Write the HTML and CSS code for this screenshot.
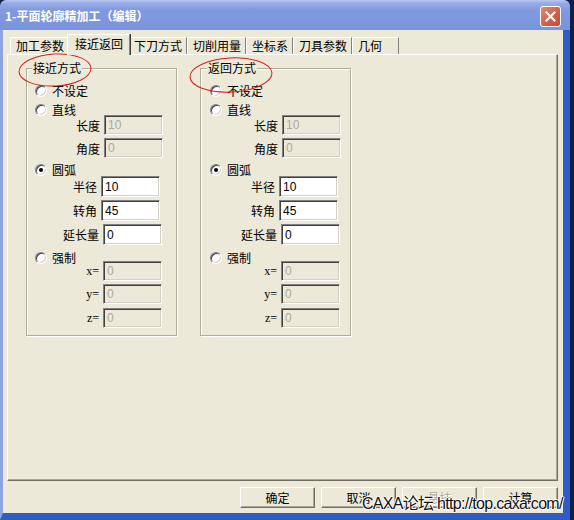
FILE: index.html
```html
<!DOCTYPE html>
<html lang="zh-CN">
<head>
<meta charset="utf-8">
<title>1-平面轮廓精加工(编辑)</title>
<link rel="stylesheet" href="styles.css">
</head>
<body>
<div class="window">
  <div class="titlebar">
    <span class="title">1-平面轮廓精加工（编辑）</span>
    <span class="close"><svg width="11" height="11" viewBox="0 0 11 11"><path d="M1.5 1.5 L9.5 9.5 M9.5 1.5 L1.5 9.5" stroke="#fff" stroke-width="2.2" stroke-linecap="square"/></svg></span>
  </div>
  <div class="frame">
    <div class="tabs">
      <div class="tab">加工参数</div>
      <div class="tab active">接近返回</div>
      <div class="tab">下刀方式</div>
      <div class="tab">切削用量</div>
      <div class="tab">坐标系</div>
      <div class="tab">刀具参数</div>
      <div class="tab">几何</div>
    </div>
    <div class="panel">
      <div class="group">
        <div class="legend">接近方式</div>
        <div class="opt r-none"><span class="radio"></span>不设定</div>
        <div class="opt r-line"><span class="radio"></span>直线</div>
        <div class="field f-len"><span class="lbl">长度</span><span class="box dis">10</span></div>
        <div class="field f-ang"><span class="lbl">角度</span><span class="box dis">0</span></div>
        <div class="opt r-arc"><span class="radio on"></span>圆弧</div>
        <div class="field tall f-rad"><span class="lbl">半径</span><span class="box">10</span></div>
        <div class="field tall f-turn"><span class="lbl">转角</span><span class="box">45</span></div>
        <div class="field tall f-ext"><span class="lbl">延长量</span><span class="box">0</span></div>
        <div class="opt r-force"><span class="radio"></span>强制</div>
        <div class="field f-x"><span class="lbl xyz">x=</span><span class="box dis">0</span></div>
        <div class="field f-y"><span class="lbl xyz">y=</span><span class="box dis">0</span></div>
        <div class="field f-z"><span class="lbl xyz">z=</span><span class="box dis">0</span></div>
      </div>
      <div class="group right">
        <div class="legend">返回方式</div>
        <div class="opt r-none"><span class="radio"></span>不设定</div>
        <div class="opt r-line"><span class="radio"></span>直线</div>
        <div class="field f-len"><span class="lbl">长度</span><span class="box dis">10</span></div>
        <div class="field f-ang"><span class="lbl">角度</span><span class="box dis">0</span></div>
        <div class="opt r-arc"><span class="radio on"></span>圆弧</div>
        <div class="field tall f-rad"><span class="lbl">半径</span><span class="box">10</span></div>
        <div class="field tall f-turn"><span class="lbl">转角</span><span class="box">45</span></div>
        <div class="field tall f-ext"><span class="lbl">延长量</span><span class="box">0</span></div>
        <div class="opt r-force"><span class="radio"></span>强制</div>
        <div class="field f-x"><span class="lbl xyz">x=</span><span class="box dis">0</span></div>
        <div class="field f-y"><span class="lbl xyz">y=</span><span class="box dis">0</span></div>
        <div class="field f-z"><span class="lbl xyz">z=</span><span class="box dis">0</span></div>
      </div>
    </div>
    <div class="buttons">
      <div class="btn">确定</div>
      <div class="btn">取消</div>
      <div class="btn disabled">悬挂</div>
      <div class="btn">计算</div>
    </div>
  </div>
  <svg class="marks" width="574" height="520" viewBox="0 0 574 520">
    <ellipse cx="55" cy="70" rx="36" ry="16" transform="rotate(-3 55 70)" fill="none" stroke="#cc2222" stroke-width="1"/>
    <ellipse cx="231" cy="75" rx="41" ry="17" transform="rotate(-3 231 75)" fill="none" stroke="#cc2222" stroke-width="1"/>
  </svg>
  <div class="watermark">CAXA论坛 http://top.caxa.com/</div>
</div>
</body>
</html>
```
FILE: styles.css
```css
html, body {
  margin: 0;
  padding: 0;
}
body {
  width: 574px;
  height: 520px;
  overflow: hidden;
  background: #0e1f4a;
  font-family: "Noto Sans CJK SC", sans-serif;
  font-size: 12px;
  color: #000;
}
.window {
  position: relative;
  width: 570px;
  height: 520px;
  display: flex;
  flex-direction: column;
}
.titlebar {
  height: 30px;
  flex: none;
  box-sizing: border-box;
  display: flex;
  align-items: flex-start;
  padding: 0 9px 0 5px;
  background: linear-gradient(180deg, #b9c8f1 0, #98ade7 3px, #8199df 10px, #7a94dc 100%);
  border-radius: 6px 6px 0 0;
}
.title {
  flex: 1;
  color: #fff;
  font-weight: bold;
  font-size: 12px;
  line-height: 16px;
  margin-top: 8px;
  white-space: nowrap;
}
.close {
  width: 21px;
  height: 21px;
  margin-top: 6px;
  box-sizing: border-box;
  border: 1px solid #fff;
  border-radius: 3px;
  background: linear-gradient(135deg, #e58a72 0%, #d1604a 55%, #c24a36 100%);
  display: flex;
  align-items: center;
  justify-content: center;
}
.frame {
  flex: 1;
  display: flex;
  flex-direction: column;
  background: #ece9d8;
  border-left: 3px solid #8ea3df;
  border-right: 7px solid #2f5bc6;
  border-bottom: 7px solid #2f5bc6;
  padding: 0 5px 0 4px;
}
.tabs {
  height: 24px;
  flex: none;
  display: flex;
  align-items: flex-end;
  padding-left: 3px;
}
.tab {
  height: 17px;
  box-sizing: border-box;
  min-width: 47px;
  padding: 0 4px 0 5px;
  line-height: 15px;
  border-top: 1px solid #fff;
  border-left: 1px solid #fff;
  border-right: 1px solid #808080;
  border-radius: 2px 0 0 0;
  white-space: nowrap;
}
.tab.active {
  position: relative;
  z-index: 1;
  height: 21px;
  margin: 0 -2px -1px -2px;
  padding: 0 6px 0 7px;
  line-height: 17px;
  background: #ece9d8;
  box-shadow: 1px 0 0 #404040;
}
.panel {
  height: 427px;
  flex: none;
  box-sizing: border-box;
  border: 1px solid;
  border-color: #fff #716f64 #716f64 #fff;
  box-shadow: inset -1px -1px 0 #aca899;
  display: flex;
  align-items: flex-start;
  gap: 23px;
  padding: 13px 0 0 18px;
}
.group {
  width: 151px;
  height: 268px;
  box-sizing: border-box;
  border: 1px solid #b0ad9a;
  box-shadow: inset 1px 1px 0 #fff, 1px 1px 0 #fff;
  display: flex;
  flex-direction: column;
}
.legend {
  align-self: flex-start;
  height: 16px;
  line-height: 16px;
  margin: -9px 0 0 5px;
  padding: 0 1px;
  background: #ece9d8;
}
.right .legend {
  margin-left: 6px;
}
.opt {
  height: 10px;
  line-height: 10px;
  display: flex;
  align-items: center;
  gap: 5px;
  padding-left: 8px;
  white-space: nowrap;
}
.right .opt {
  padding-left: 9px;
}
.radio {
  flex: none;
  position: relative;
  width: 12px;
  height: 12px;
  box-sizing: border-box;
  border-radius: 50%;
  border: 1px solid;
  border-color: #808080 #fff #fff #808080;
  box-shadow: inset 1px 1px 0 #404040, inset -1px -1px 0 #d4d0c8;
  background: #fff;
}
.radio.on::after {
  content: "";
  position: absolute;
  left: 3px;
  top: 3px;
  width: 4px;
  height: 4px;
  border-radius: 50%;
  background: #000;
}
.field {
  height: 20px;
  display: flex;
  align-items: stretch;
}
.field.tall {
  height: 21px;
}
.lbl {
  flex: none;
  width: 70px;
  margin-right: 4px;
  text-align: right;
  display: flex;
  align-items: center;
  justify-content: flex-end;
  white-space: nowrap;
}
.lbl.xyz {
  font-family: "Liberation Serif", "DejaVu Serif", serif;
  font-size: 12px;
}
.box {
  flex: none;
  width: 59px;
  box-sizing: border-box;
  border: 1px solid;
  border-color: #808080 #fff #fff #808080;
  box-shadow: inset 1px 1px 0 #404040, inset -1px -1px 0 #d4d0c8;
  background: #fff;
  padding-left: 3px;
  display: flex;
  align-items: center;
  font-family: "Liberation Sans", Arial, sans-serif;
  font-size: 12px;
}
.box.dis {
  background: #ece9d8;
  color: #aca899;
}
.r-none { margin-top: 10px; }
.r-line { margin-top: 9px; }
.f-len { margin-top: 0; padding-left: 3px; }
.f-ang { margin-top: 3px; padding-left: 3px; }
.r-arc { margin-top: 7px; }
.f-rad { margin-top: 1px; }
.f-turn { margin-top: 3px; }
.f-ext { margin-top: 3px; padding-left: 2px; }
.r-force { margin-top: 8px; }
.f-x { margin-top: -2px; padding-left: 2px; }
.f-y { margin-top: 3px; padding-left: 2px; }
.f-z { margin-top: 4px; padding-left: 2px; }
.right .field {
  margin-left: 4px;
}
.buttons {
  display: flex;
  justify-content: flex-end;
  gap: 6px;
  margin-top: 6px;
}
.btn {
  width: 75px;
  height: 21px;
  box-sizing: border-box;
  border: 1px solid;
  border-color: #fff #716f64 #716f64 #fff;
  box-shadow: inset -1px -1px 0 #aca899;
  display: flex;
  align-items: center;
  justify-content: center;
}
.btn.disabled {
  color: #aca899;
  text-shadow: 1px 1px 0 #fff;
}
.marks {
  position: absolute;
  left: 0;
  top: 0;
  pointer-events: none;
}
.watermark {
  position: absolute;
  left: 362px;
  top: 495px;
  font-family: "Liberation Sans", "Noto Sans CJK SC", sans-serif;
  font-size: 16px;
  line-height: 18px;
  letter-spacing: -0.7px;
  white-space: nowrap;
  color: #111;
  text-shadow: 1px 0 0 #fff, -1px 0 0 #fff, 0 1px 0 #fff, 0 -1px 0 #fff;
}
```
